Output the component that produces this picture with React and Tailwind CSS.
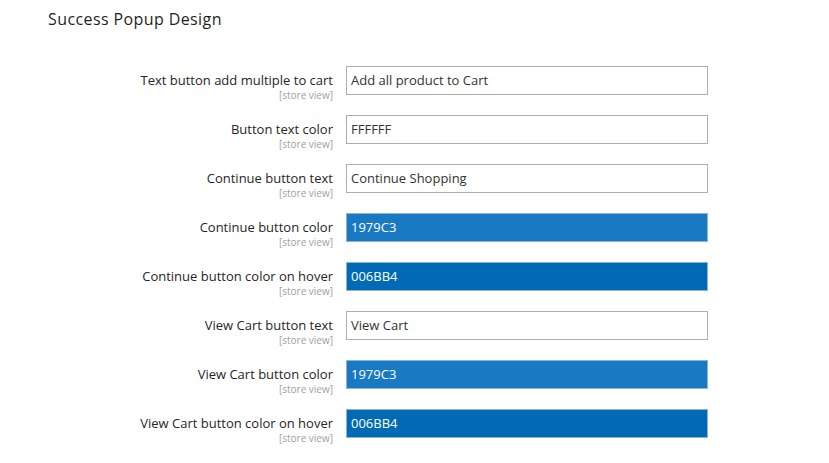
import React from "react";

const rows = [
  { label: "Text button add multiple to cart", value: "Add all product to Cart" },
  { label: "Button text color", value: "FFFFFF" },
  { label: "Continue button text", value: "Continue Shopping" },
  { label: "Continue button color", value: "1979C3", color: "a" },
  { label: "Continue button color on hover", value: "006BB4", color: "b" },
  { label: "View Cart button text", value: "View Cart" },
  { label: "View Cart button color", value: "1979C3", color: "a" },
  { label: "View Cart button color on hover", value: "006BB4", color: "b" },
];

export default function App() {
  return (
    <div
      className="w-[829px] h-[463px] bg-white overflow-hidden"
      style={{ fontFamily: '"Open Sans", "Noto Sans", sans-serif' }}
    >
      <div className="pl-[48px] pt-[9px] text-[16px] leading-[20px] text-[#1f1f1f] tracking-[0.4px] font-medium">
        Success Popup Design
      </div>
      <div className="flex flex-col gap-[20px] pt-[37px]">
        {rows.map((r, i) => (
          <div key={i} className="flex h-[29px]">
            <div className="w-[333px] text-right pt-[6px]">
              <div className="text-[13px] leading-[17px] font-medium text-[#262626]">{r.label}</div>
              <div className="text-[10px] leading-[12px] text-[#a0a0a0]">[store view]</div>
            </div>
            <div
              className={
                "ml-[13px] w-[362px] h-[29px] border flex items-center pl-[4px] text-[13px] " +
                (r.color === "a"
                  ? "bg-[#1979c3] border-[#8fb3d3] text-white"
                  : r.color === "b"
                  ? "bg-[#006bb4] border-[#8fb3d3] text-white"
                  : "bg-white border-[#adadad] text-[#333]")
              }
            >
              {r.value}
            </div>
          </div>
        ))}
      </div>
    </div>
  );
}
